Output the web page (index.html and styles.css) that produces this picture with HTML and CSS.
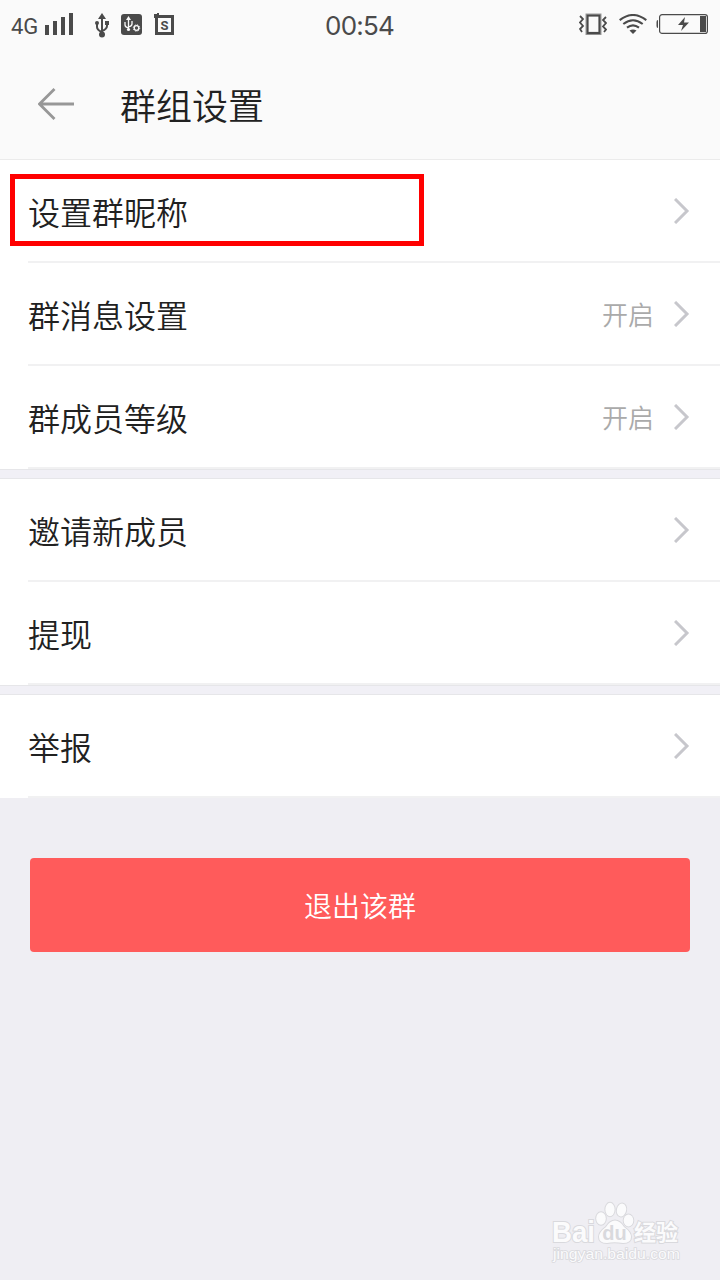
FILE: index.html
```html
<!DOCTYPE html>
<html lang="zh-CN">

<head>
    <meta charset="UTF-8">
    <meta name="viewport" content="width=device-width, initial-scale=1.0">
    <title>群组设置</title>
    <link rel="stylesheet" href="styles.css">
</head>

<body>
    <div class="statusBar">
        <div class="statusLeft">
            <span class="network">4G</span>
            <svg class="signal" width="28" height="22" viewBox="0 0 28 22">
                <path d="M0 12h4v10H0zM8 8h4v14H8zM16 4h4v18h-4zM24 0h4v22h-4z" fill="#4a4a4a" />
            </svg>
            <svg class="usb" width="14" height="25" viewBox="0 0 14 25">
                <path d="M7 0l4 6H3z" fill="#4a4a4a" />
                <path d="M7 5v16M2 10v4q0 3 5 5M12 10v3q0 3-5 5" fill="none" stroke="#4a4a4a" stroke-width="2" />
                <circle cx="2" cy="10" r="2" fill="#4a4a4a" />
                <path d="M10 8h4v4h-4z" fill="#4a4a4a" />
                <circle cx="7" cy="21.500" r="3" fill="#4a4a4a" />
            </svg>
            <svg class="debug" width="21" height="21" viewBox="0 0 21 21">
                <rect width="21" height="21" rx="3" fill="#4a4a4a" />
                <path d="M7.500 2l2.500 4H5z" fill="#fafafa" />
                <path d="M7.500 5v10M4 8v3q0 2 3.500 3M11 7v3q0 2-3.500 3" fill="none" stroke="#fafafa" stroke-width="1.300" />
                <circle cx="7.500" cy="15.500" r="1.600" fill="#fafafa" />
                <circle cx="15.500" cy="14" r="2.300" fill="none" stroke="#fafafa" stroke-width="1.300" />
                <circle cx="15.500" cy="14" r="3.200" fill="none" stroke="#fafafa" stroke-width="1" stroke-dasharray="1.250 1.263" />
            </svg>
            <svg class="appIcon" width="20" height="22" viewBox="0 0 20 22">
                <path d="M0 1h3V0h2v2h15v20H1V5H0zM4 5v14h13V5z" fill="#4a4a4a" fill-rule="evenodd" />
                <text x="10.500" y="16.500" text-anchor="middle" class="appLetter">S</text>
            </svg>
        </div>
        <div class="clock">00:54</div>
        <div class="statusRight">
            <svg class="vibrate" width="28" height="22" viewBox="0 0 28 22">
                <rect x="7" y="1" width="15" height="20.500" fill="none" stroke="#9a9a9a" stroke-width="1" />
                <rect x="8.500" y="2.500" width="12" height="17.500" fill="none" stroke="#4a4a4a" stroke-width="2.200" />
                <path d="M1 3l3 3-3 3.500L4 13l-3 3 2 3M27 4l-3 3 3 3-3 3.500 3 3L25 19" fill="none" stroke="#4a4a4a" stroke-width="1.800" />
            </svg>
            <svg class="wifi" width="28" height="20" viewBox="0 0 28 20">
                <path d="M.7 6.200Q14-4.200 27.300 6.200M4.300 10Q14 2.500 23.700 10M8 13.600Q14 9 20 13.600" fill="none" stroke="#4a4a4a" stroke-width="2.100" />
                <path d="M10.500 16.500Q14 14.500 17.500 16.500L14 20z" fill="#4a4a4a" />
            </svg>
            <svg class="battery" width="52" height="20" viewBox="0 0 52 20">
                <path d="M2 6Q.5 6 .5 8v4Q.5 14 2 14z" fill="#4a4a4a" />
                <rect x="3.600" y=".6" width="47.800" height="18.800" rx="2.500" fill="none" stroke="#4a4a4a" stroke-width="1.200" />
                <path d="M44 2h6v16h-6zM29 3l-7 8h5l-2 6 8-8.500h-5z" fill="#4a4a4a" />
            </svg>
        </div>
    </div>

    <div class="header">
        <svg class="back" width="37" height="32" viewBox="0 0 37 32">
            <path d="M36 16H2M16.500 1L1.500 16l15 15" fill="none" stroke="#979797" stroke-width="2.800" />
        </svg>
        <h1>群组设置</h1>
    </div>

    <div class="group">
        <div class="row">
            <div class="label">设置群昵称</div>
            <svg class="arrow" width="16" height="26" viewBox="0 0 16 26"><path d="M1 1L13 13 1 25" /></svg>
            <div class="highlight"></div>
        </div>
        <div class="row">
            <div class="label">群消息设置</div>
            <div class="value">开启</div>
            <svg class="arrow" width="16" height="26" viewBox="0 0 16 26"><path d="M1 1L13 13 1 25" /></svg>
        </div>
        <div class="row">
            <div class="label">群成员等级</div>
            <div class="value">开启</div>
            <svg class="arrow" width="16" height="26" viewBox="0 0 16 26"><path d="M1 1L13 13 1 25" /></svg>
        </div>
    </div>
    <div class="space"></div>
    <div class="group">
        <div class="row">
            <div class="label">邀请新成员</div>
            <svg class="arrow" width="16" height="26" viewBox="0 0 16 26"><path d="M1 1L13 13 1 25" /></svg>
        </div>
        <div class="row">
            <div class="label">提现</div>
            <svg class="arrow" width="16" height="26" viewBox="0 0 16 26"><path d="M1 1L13 13 1 25" /></svg>
        </div>
    </div>
    <div class="space"></div>
    <div class="group">
        <div class="row">
            <div class="label">举报</div>
            <svg class="arrow" width="16" height="26" viewBox="0 0 16 26"><path d="M1 1L13 13 1 25" /></svg>
        </div>
    </div>

    <button class="quit">退出该群</button>

    <svg class="watermark" width="140" height="66" viewBox="0 0 140 66">
        <g class="mark">
            <text x="5" y="44" class="brand" textLength="43" lengthAdjust="spacingAndGlyphs">Bai</text>
            <ellipse cx="54" cy="20.500" rx="4.800" ry="6.200" />
            <ellipse cx="63" cy="11.500" rx="4.600" ry="6.700" />
            <ellipse cx="74.500" cy="12" rx="4.600" ry="6.500" transform="rotate(12 74.500 12)" />
            <ellipse cx="81.500" cy="22.500" rx="4.800" ry="6" />
            <path d="M68 22.500Q63 22.500 59 29Q52 34 52 39Q52 45 60 45Q67 43.500 76 45Q84 45 84 39Q84 34 77 29Q73 22.500 68 22.500Z" />
            <text x="87" y="42" class="brandCn">经验</text>
            <text x="6" y="61" class="site" textLength="127" lengthAdjust="spacingAndGlyphs">jingyan.baidu.com</text>
        </g>
        <text x="67.500" y="42" text-anchor="middle" class="du">du</text>
    </svg>
</body>

</html>
```
FILE: styles.css
```css
* {
  margin: 0;
  padding: 0;
  box-sizing: border-box;
  font-family: "Liberation Sans", "Noto Sans CJK SC", sans-serif;
}
body {
  width: 720px;
  height: 1280px;
  overflow: hidden;
  background-color: #efeef3;
}
svg {
  display: block;
  flex-shrink: 0;
}

.statusBar {
  display: grid;
  grid-template-columns: 1fr auto 1fr;
  height: 50px;
  padding: 0 12px 0 11px;
  background-color: #fafafa;
  color: #4a4a4a;
}
.statusLeft,
.statusRight {
  display: flex;
  align-items: flex-start;
  padding-top: 13px;
}
.statusRight {
  justify-content: flex-end;
  gap: 12px;
  padding-top: 14px;
}
.statusRight .vibrate {
  margin-top: -1px;
}
.statusRight .battery {
  margin-left: -3px;
}
.network {
  width: 34px;
  font-family: Roboto, sans-serif;
  font-size: 22px;
  line-height: 28px;
}
.usb {
  margin-left: 22px;
}
.debug {
  margin: 1px 12px 0;
}
.appLetter {
  font-family: Roboto, sans-serif;
  font-size: 13px;
  font-weight: 700;
  fill: #4a4a4a;
}
.clock {
  font-family: Inter, sans-serif;
  font-size: 26px;
  line-height: 52px;
  letter-spacing: -0.8px;
}

.header {
  display: flex;
  align-items: center;
  height: 110px;
  padding: 0 38px 2px;
  background-color: #fafafa;
  border-bottom: 1px solid #ebebeb;
}
.header h1 {
  margin-left: 45px;
  padding-top: 1px;
  font-family: "Noto Sans CJK SC", sans-serif;
  font-size: 36px;
  font-weight: 350;
  line-height: 50px;
  color: #212121;
}

.group {
  background-color: white;
}
.row {
  position: relative;
  display: flex;
  align-items: center;
  height: 103px;
  margin-left: 28px;
  padding-right: 30px;
  border-bottom: 2px solid #f1f1f2;
}
.label {
  flex: 1;
  padding-top: 1px;
  font-family: "Noto Sans CJK SC", sans-serif;
  font-size: 32px;
  font-weight: 350;
  line-height: 48px;
  color: #212121;
}
.value {
  margin-right: 20px;
  padding-top: 1px;
  font-family: "Noto Sans CJK SC", sans-serif;
  font-size: 26px;
  font-weight: 350;
  line-height: 40px;
  color: #aaaaaa;
}
.arrow path {
  fill: none;
  stroke: #c7c7cc;
  stroke-width: 3;
}
.highlight {
  position: absolute;
  left: -18px;
  top: 14px;
  width: 414px;
  height: 72px;
  border: 5px solid red;
}
.space {
  height: 10px;
  background-color: #f1f0f6;
  border-top: 1px solid #e6e6e9;
  border-bottom: 1px solid #e6e6e9;
}

.quit {
  display: block;
  width: 660px;
  height: 94px;
  margin: 60px auto 0;
  border: none;
  border-radius: 4px;
  background-color: #ff5b5b;
  color: white;
  font-size: 28px;
  font-weight: 350;
}

.watermark {
  position: absolute;
  left: 547px;
  top: 1198px;
}
.mark {
  fill: #fbfbfc;
  stroke: #d9d9dd;
  stroke-width: 2;
  paint-order: stroke;
}
.brand {
  font-size: 29px;
  font-weight: 700;
}
.brandCn {
  font-size: 22px;
  font-weight: 700;
}
.site {
  font-size: 14px;
  stroke-width: 1.5;
}
.du {
  font-size: 20px;
  font-weight: 700;
  fill: #d9d9dd;
}
```
